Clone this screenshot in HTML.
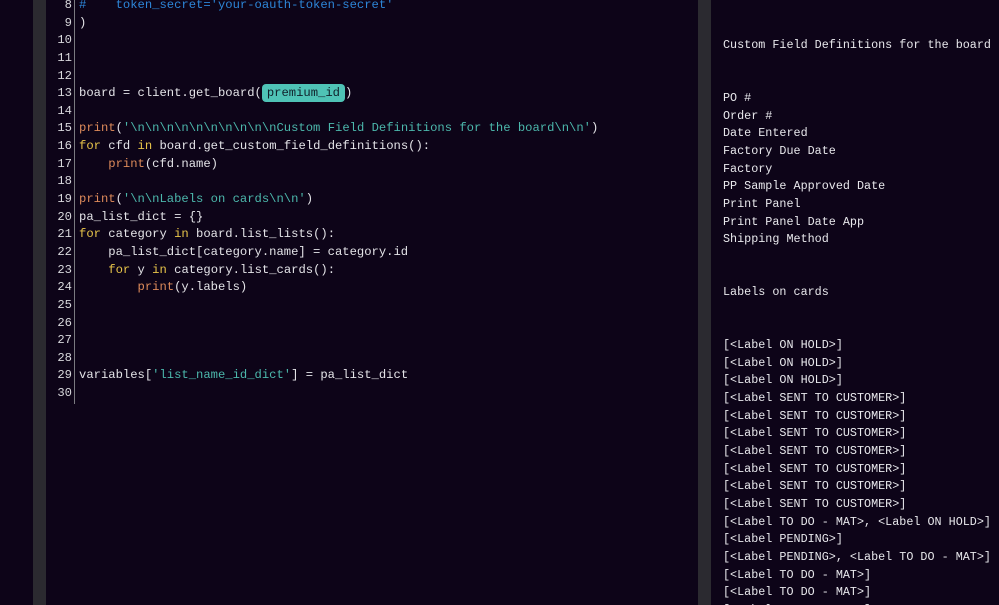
<!DOCTYPE html>
<html style="width:999px;height:605px;overflow:hidden"><head><style>
body{margin:0;width:999px;height:605px;overflow:hidden;background:#0d0418;position:relative;font-family:"Liberation Mono",monospace;}
.s1{position:absolute;left:33px;top:0;width:13px;height:605px;background:#2b2a30;}
.s2{position:absolute;left:698px;top:0;width:13px;height:605px;background:#2b2a30;}
.vl{position:absolute;left:74px;top:0;width:1px;height:404px;background:#7a7a80;}
.ed{position:absolute;left:0;top:-3px;font-size:12.2px;line-height:17.64px;color:#e4e4e8;}
.ln{position:absolute;left:40px;width:32px;text-align:right;color:#d8d8dc;}
.cd{position:absolute;left:79px;white-space:pre;}
.k{color:#e8c54a}.p{color:#dd8a5a}.s{color:#4cb8ac}.c{color:#2d86d8}
.hl{background:#4fc3b6;color:#10202a;border-radius:4px;padding:2px 5px;}
.wrap{position:absolute;left:0;top:0;width:999px;height:605px;overflow:hidden;}
.out{position:absolute;left:723px;top:2px;margin:0;font-size:11.75px;line-height:17.64px;color:#e8e8ec;font-family:"Liberation Mono",monospace;white-space:pre;}
</style></head><body>
<div class="wrap">
<div class="s1"></div><div class="s2"></div><div class="vl"></div>
<div class="ed">
<div class="ln" style="top:0">8</div><div class="cd" style="top:0"><span class="c">#    token_secret='your-oauth-token-secret'</span></div>
<div class="ln" style="top:17.64px">9</div><div class="cd" style="top:17.64px">)</div>
<div class="ln" style="top:35.28px">10</div>
<div class="ln" style="top:52.92px">11</div>
<div class="ln" style="top:70.56px">12</div>
<div class="ln" style="top:88.2px">13</div><div class="cd" style="top:88.2px">board = client.get_board(<span class="hl">premium_id</span>)</div>
<div class="ln" style="top:105.84px">14</div>
<div class="ln" style="top:123.48px">15</div><div class="cd" style="top:123.48px"><span class="p">print</span>(<span class="s">'\n\n\n\n\n\n\n\n\n\nCustom Field Definitions for the board\n\n'</span>)</div>
<div class="ln" style="top:141.12px">16</div><div class="cd" style="top:141.12px"><span class="k">for</span> cfd <span class="k">in</span> board.get_custom_field_definitions():</div>
<div class="ln" style="top:158.76px">17</div><div class="cd" style="top:158.76px">    <span class="p">print</span>(cfd.name)</div>
<div class="ln" style="top:176.4px">18</div>
<div class="ln" style="top:194.04px">19</div><div class="cd" style="top:194.04px"><span class="p">print</span>(<span class="s">'\n\nLabels on cards\n\n'</span>)</div>
<div class="ln" style="top:211.68px">20</div><div class="cd" style="top:211.68px">pa_list_dict = {}</div>
<div class="ln" style="top:229.32px">21</div><div class="cd" style="top:229.32px"><span class="k">for</span> category <span class="k">in</span> board.list_lists():</div>
<div class="ln" style="top:246.96px">22</div><div class="cd" style="top:246.96px">    pa_list_dict[category.name] = category.id</div>
<div class="ln" style="top:264.6px">23</div><div class="cd" style="top:264.6px">    <span class="k">for</span> y <span class="k">in</span> category.list_cards():</div>
<div class="ln" style="top:282.24px">24</div><div class="cd" style="top:282.24px">        <span class="p">print</span>(y.labels)</div>
<div class="ln" style="top:299.88px">25</div>
<div class="ln" style="top:317.52px">26</div>
<div class="ln" style="top:335.16px">27</div>
<div class="ln" style="top:352.8px">28</div>
<div class="ln" style="top:370.44px">29</div><div class="cd" style="top:370.44px">variables[<span class="s">'list_name_id_dict'</span>] = pa_list_dict</div>
<div class="ln" style="top:388.08px">30</div>
</div>
<pre class="out">


Custom Field Definitions for the board


PO #
Order #
Date Entered
Factory Due Date
Factory
PP Sample Approved Date
Print Panel
Print Panel Date App
Shipping Method


Labels on cards


[&lt;Label ON HOLD&gt;]
[&lt;Label ON HOLD&gt;]
[&lt;Label ON HOLD&gt;]
[&lt;Label SENT TO CUSTOMER&gt;]
[&lt;Label SENT TO CUSTOMER&gt;]
[&lt;Label SENT TO CUSTOMER&gt;]
[&lt;Label SENT TO CUSTOMER&gt;]
[&lt;Label SENT TO CUSTOMER&gt;]
[&lt;Label SENT TO CUSTOMER&gt;]
[&lt;Label SENT TO CUSTOMER&gt;]
[&lt;Label TO DO - MAT&gt;, &lt;Label ON HOLD&gt;]
[&lt;Label PENDING&gt;]
[&lt;Label PENDING&gt;, &lt;Label TO DO - MAT&gt;]
[&lt;Label TO DO - MAT&gt;]
[&lt;Label TO DO - MAT&gt;]
[&lt;Label TO DO - MAT&gt;]</pre>
</div>
</body></html>
